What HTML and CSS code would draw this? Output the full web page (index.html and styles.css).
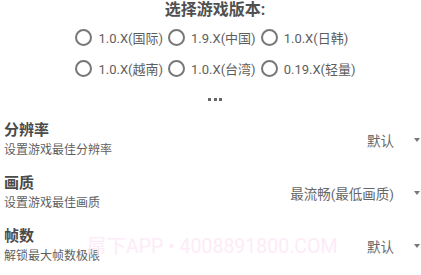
FILE: index.html
```html
<!DOCTYPE html>
<html lang="zh">
<head>
<meta charset="utf-8">
<link rel="stylesheet" href="styles.css">
</head>
<body>
<div class="page">
  <div class="heading">选择游戏版本:</div>
  <div class="radios">
    <label class="radio"><span class="circle"></span><span class="rtext">1.0.X(国际)</span></label>
    <label class="radio"><span class="circle"></span><span class="rtext">1.9.X(中国)</span></label>
    <label class="radio"><span class="circle"></span><span class="rtext">1.0.X(日韩)</span></label>
    <label class="radio"><span class="circle"></span><span class="rtext">1.0.X(越南)</span></label>
    <label class="radio"><span class="circle"></span><span class="rtext">1.0.X(台湾)</span></label>
    <label class="radio"><span class="circle"></span><span class="rtext">0.19.X(轻量)</span></label>
  </div>
  <div class="more"><span class="dot"></span><span class="dot"></span><span class="dot"></span></div>
  <div class="settings">
    <div class="row">
      <div class="info">
        <div class="name">分辨率</div>
        <div class="desc">设置游戏最佳分辨率</div>
      </div>
      <div class="select"><span class="value">默认</span><span class="arrow"></span></div>
    </div>
    <div class="row">
      <div class="info">
        <div class="name">画质</div>
        <div class="desc">设置游戏最佳画质</div>
      </div>
      <div class="select"><span class="value">最流畅(最低画质)</span><span class="arrow"></span></div>
    </div>
    <div class="row">
      <div class="info">
        <div class="name">帧数</div>
        <div class="desc">解锁最大帧数极限</div>
      </div>
      <div class="select"><span class="value">默认</span><span class="arrow"></span></div>
    </div>
  </div>
  <div class="watermark">屌下APP • 4008891800.COM</div>
</div>
</body>
</html>
```
FILE: styles.css
```css
html, body {
  margin: 0;
  padding: 0;
  background: #ffffff;
}
body {
  font-family: Roboto, "Noto Sans CJK SC", sans-serif;
  color: #555;
}
.page {
  position: relative;
  width: 421px;
  height: 275px;
  overflow: hidden;
}
.heading {
  text-align: center;
  font-size: 16px;
  font-weight: bold;
  line-height: 20px;
  color: #505050;
  padding-left: 9px;
}
.radios {
  display: grid;
  grid-template-columns: repeat(3, auto);
  justify-content: center;
  column-gap: 5px;
  row-gap: 9px;
  margin-top: 6px;
  padding-left: 10px;
}
.radio {
  display: flex;
  align-items: center;
  gap: 6px;
  height: 22px;
}
.circle {
  box-sizing: border-box;
  width: 17px;
  height: 17px;
  border: 2px solid #777;
  border-radius: 50%;
  flex: none;
}
.rtext {
  font-size: 13px;
  color: #5e5e5e;
  white-space: nowrap;
}
.more {
  display: flex;
  justify-content: center;
  gap: 2.5px;
  height: 41px;
  align-items: center;
  padding-left: 9px;
}
.dot {
  width: 3px;
  height: 3px;
  background: #666;
}
.settings {
  display: flex;
  flex-direction: column;
  gap: 13px;
}
.row {
  display: flex;
  align-items: center;
  justify-content: space-between;
  padding: 0 1px 0 4px;
  height: 40px;
}
.name {
  font-size: 15px;
  font-weight: bold;
  line-height: 20px;
  color: #4a4a4a;
}
.desc {
  font-size: 12px;
  line-height: 20px;
  color: #5f5f5f;
}
.select {
  display: flex;
  align-items: center;
  gap: 20px;
}
.value {
  font-size: 13.5px;
  color: #666;
}
.arrow {
  width: 0;
  height: 0;
  border-left: 3.5px solid transparent;
  border-right: 3.5px solid transparent;
  border-top: 4px solid #777;
}
.watermark {
  position: absolute;
  left: 87px;
  top: 234px;
  font-size: 19.5px;
  line-height: 26px;
  color: #fdebf7;
  white-space: nowrap;
  pointer-events: none;
}
```
